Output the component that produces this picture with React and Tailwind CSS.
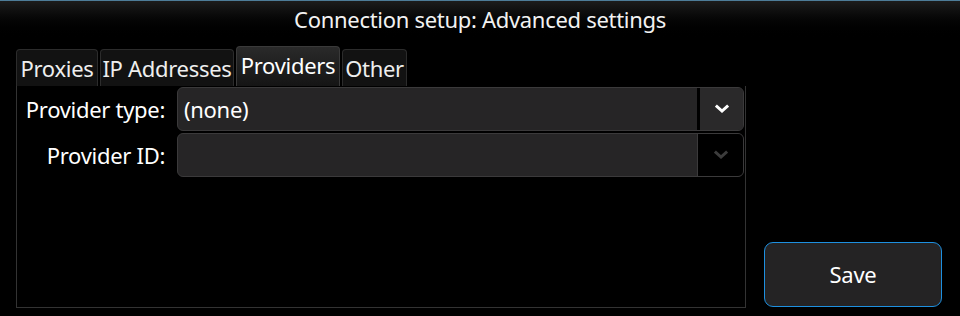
import React from "react";

const Chevron = ({ color }) => (
  <svg width="14" height="10" viewBox="0 0 14 10">
    <path d="M2 2.5 L7 7 L12 2.5" fill="none" stroke={color} strokeWidth="3" strokeLinecap="square" />
  </svg>
);

const tabs = [
  { t: "Proxies", w: "w-[82px]" },
  { t: "IP Addresses", w: "w-[134px]" },
  { t: "Providers", w: "w-[104px]" },
  { t: "Other", w: "w-[65px]" },
];

export default function App() {
  const font = { fontFamily: '"Noto Sans", "Open Sans", sans-serif' };
  return (
    <div className="w-[960px] h-[316px] bg-black text-white overflow-hidden flex flex-col" style={font}>
      <div className="h-[40px] shrink-0 border-t border-[#4d7c98] bg-gradient-to-b from-[#1c1c1c] to-black flex items-center justify-center">
        <span className="text-[22px] leading-none mt-[-4px] text-[#f2f2f2] tracking-[-0.3px]">Connection setup: Advanced settings</span>
      </div>
      <div className="flex pl-[16px] gap-[2px] items-end h-[45px] shrink-0 mt-[1px]">
        {tabs.map(({ t, w }) => {
          const active = t === "Providers";
          return (
            <div
              key={t}
              className={
                active
                  ? `${w} h-[40px] flex items-center justify-center rounded-t-[4px] border border-b-0 border-[#3a3a3a] bg-gradient-to-b from-[#2a2a2a] to-[#151515] text-[22px] text-white tracking-[-0.3px]`
                  : `${w} h-[37px] flex items-center justify-center rounded-t-[4px] border border-b-0 border-[#2c2c2c] bg-[#121212] text-[22px] text-[#eeeeee] tracking-[-0.3px]`
              }
            >
              <span className={active ? "leading-none mt-[-3px]" : "leading-none mt-[-1px]"}>{t}</span>
            </div>
          );
        })}
      </div>
      <div className="flex">
        <div className="ml-[16px] w-[730px] h-[222px] border-l border-r border-b border-[#333333] flex flex-col gap-[2px] pt-[1px] pr-[1px]">
          <div className="flex items-center h-[44px]">
            <div className="w-[148px] text-right text-[22px] tracking-[-0.3px] leading-none">Provider type:</div>
            <div className="ml-[12px] flex-1 h-[44px] rounded-[6px] border border-[#3b3a3b] bg-[#262526] flex overflow-hidden">
              <div className="flex-1 flex items-center pl-[6px] text-[22px] tracking-[-0.3px] leading-none">(none)</div>
              <div className="w-[3px] bg-black"></div>
              <div className="w-[43px] flex items-center justify-center bg-[#2a292a]">
                <Chevron color="#ffffff" />
              </div>
            </div>
          </div>
          <div className="flex items-center h-[44px]">
            <div className="w-[148px] text-right text-[22px] tracking-[-0.3px] leading-none">Provider ID:</div>
            <div className="ml-[12px] flex-1 h-[44px] rounded-[6px] border border-[#3b3a3b] bg-[#262526] flex overflow-hidden">
              <div className="flex-1"></div>
              <div className="w-[1px] bg-[#3b3a3b]"></div>
              <div className="w-[45px] flex items-center justify-center bg-black">
                <Chevron color="#3c3c3c" />
              </div>
            </div>
          </div>
        </div>
        <div className="flex-1 flex items-end pb-[1px] pl-[18px]">
          <button className="w-[178px] h-[65px] rounded-[9px] border-[1.5px] border-[#1e90e0] bg-[#242324] text-[22px] text-white tracking-[-0.3px]">
            Save
          </button>
        </div>
      </div>
    </div>
  );
}
